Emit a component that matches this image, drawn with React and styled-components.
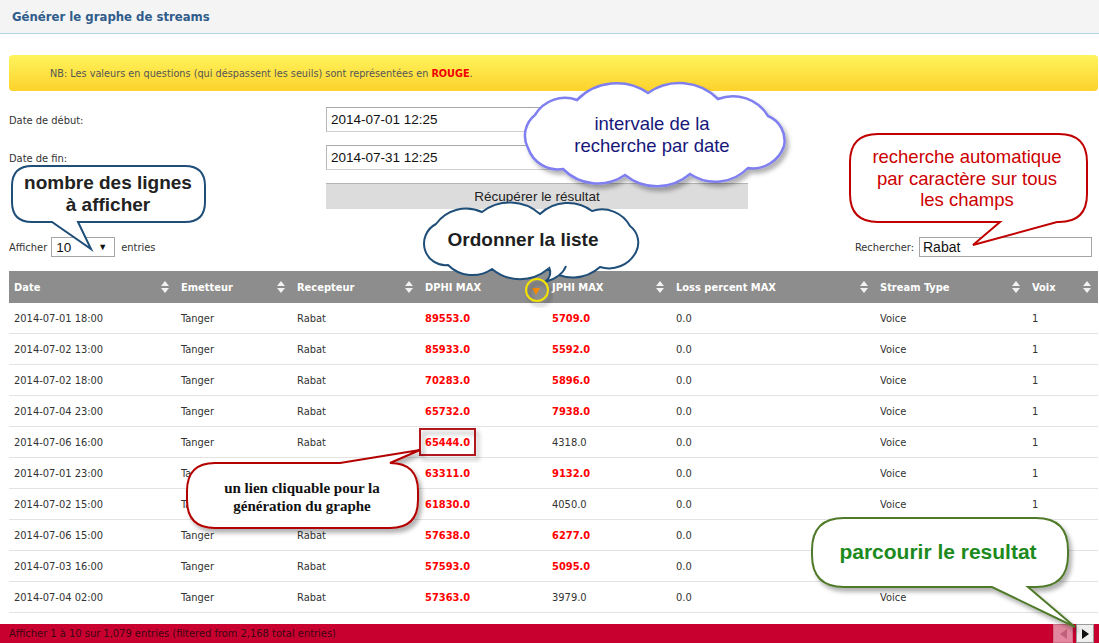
import React from 'react';
import styled, { createGlobalStyle } from 'styled-components';

// --- DATA ---
const COLUMNS = [
  { label: 'Date', width: 167 },
  { label: 'Emetteur', width: 116 },
  { label: 'Recepteur', width: 128 },
  { label: 'DPHI MAX', width: 127, active: true },
  { label: 'JPHI MAX', width: 124 },
  { label: 'Loss percent MAX', width: 204 },
  { label: 'Stream Type', width: 152 },
  { label: 'Voix', width: 71 },
];

const GRID = COLUMNS.map((c) => `${c.width}px`).join(' ');

const ROWS = [
  ['2014-07-01 18:00', '89553.0', '5709.0', true],
  ['2014-07-02 13:00', '85933.0', '5592.0', true],
  ['2014-07-02 18:00', '70283.0', '5896.0', true],
  ['2014-07-04 23:00', '65732.0', '7938.0', true],
  ['2014-07-06 16:00', '65444.0', '4318.0', false],
  ['2014-07-01 23:00', '63311.0', '9132.0', true],
  ['2014-07-02 15:00', '61830.0', '4050.0', false],
  ['2014-07-06 15:00', '57638.0', '6277.0', true],
  ['2014-07-03 16:00', '57593.0', '5095.0', true],
  ['2014-07-04 02:00', '57363.0', '3979.0', false],
];

const UI_FONT = "'DejaVu Sans Condensed', 'Liberation Sans', sans-serif";
const ARIAL = "'Liberation Sans', Arial, sans-serif";

// --- GLOBAL ---
const GlobalStyle = createGlobalStyle`
  html, body { margin: 0; padding: 0; background: #fff; }
  body { font-family: ${UI_FONT}; color: #333; }
  * { box-sizing: border-box; }
`;

// --- LAYOUT ---
const Page = styled.div`
  position: relative;
  width: 1099px;
  height: 643px;
  overflow: hidden;
  display: flex;
  flex-direction: column;
`;

const TitleBar = styled.header`
  height: 34px;
  flex-shrink: 0;
  background: #f4f4f4;
  border-bottom: 1px solid #b3d3e3;
  display: flex;
  align-items: center;
  padding-left: 12px;
  font-size: 13px;
  font-weight: 700;
  color: #2f5c8b;
`;

const Content = styled.main`
  flex: 1;
  padding: 0 1px 0 9px;
  display: flex;
  flex-direction: column;
`;

const Notice = styled.div`
  margin-top: 21px;
  height: 36px;
  border-radius: 4px;
  background: linear-gradient(#fff45c, #fdd22c);
  display: flex;
  align-items: center;
  padding-left: 41px;
  font-size: 10.8px;
  color: #555;

  b { color: #f00000; }
`;

// --- FORM ---
const DateForm = styled.div`
  margin-top: 16px;
  display: grid;
  grid-template-columns: 317px 432px;
  grid-auto-rows: 25px;
  row-gap: 13px;
  align-items: center;
`;

const FieldLabel = styled.label`
  font-size: 11px;
  color: #333;
  padding-top: 1px;
`;

const DateInput = styled.input`
  height: 25px;
  width: 100%;
  border: 1px solid #d0d0d0;
  border-top-color: #a8a8a8;
  border-left-color: #b8b8b8;
  padding: 0 4px;
  font-family: ${ARIAL};
  font-size: 13.5px;
  color: #111;
  outline: none;
`;

const SubmitButton = styled.button`
  grid-column: 2;
  width: 422px;
  height: 26px;
  border: none;
  border-top: 1px solid #b5b5b5;
  background: #dcdcdc;
  font-family: ${ARIAL};
  font-size: 13.5px;
  color: #222;
  padding: 0;
`;

// --- CONTROLS ---
const Controls = styled.div`
  margin-top: 29px;
  height: 20px;
  display: flex;
  align-items: center;
  justify-content: space-between;
  font-size: 11px;
`;

const ControlGroup = styled.div`
  display: flex;
  align-items: center;
`;

const LengthSelect = styled.div`
  width: 64px;
  height: 20px;
  margin: 0 6px 0 4px;
  border: 1px solid #a5a5a5;
  display: flex;
  align-items: center;
  justify-content: space-between;
  padding: 0 7px 0 4px;
  font-family: ${ARIAL};
  font-size: 13.5px;
  color: #111;

  span { font-size: 9px; }
`;

const SearchInput = styled.input`
  width: 173px;
  height: 20px;
  margin: 0 6px 0 5px;
  border: 1px solid #a5a5a5;
  padding: 0 3px;
  font-family: ${ARIAL};
  font-size: 14px;
  color: #111;
  outline: none;
`;

// --- TABLE ---
const Table = styled.div`
  margin-top: 14px;
  width: 1089px;
`;

const HeadRow = styled.div`
  display: grid;
  grid-template-columns: ${GRID};
  height: 32px;
  background: #8d8d8d;
`;

const HeadCell = styled.div`
  display: flex;
  align-items: center;
  justify-content: space-between;
  padding: 0 7px 0 5px;
  font-size: 11px;
  font-weight: 700;
  color: #fff;
`;

const SortIcon = styled.span`
  display: flex;
  flex-direction: column;
  gap: 2px;
  transform: translateY(${(p) => (p.$active ? 4 : 0)}px);

  &::before,
  &::after {
    content: '';
    border-left: 4px solid transparent;
    border-right: 4px solid transparent;
  }
  &::before {
    border-bottom: 5px solid #f2f2f2;
    display: ${(p) => (p.$active ? 'none' : 'block')};
  }
  &::after {
    border-top: ${(p) => (p.$active ? '7px solid #f58a07' : '5px solid #f2f2f2')};
  }
`;

const BodyRow = styled.div`
  display: grid;
  grid-template-columns: ${GRID};
  height: 31px;
  border-bottom: 1px solid #e3e3e3;
  align-items: center;
`;

const Cell = styled.div`
  padding-left: 5px;
  font-size: 11px;
  color: ${(p) => (p.$alert ? '#ff0000' : '#333')};
  font-weight: ${(p) => (p.$alert ? 700 : 400)};
`;

// --- FOOTER ---
const Footer = styled.footer`
  height: 19px;
  flex-shrink: 0;
  background: #c8002f;
  display: flex;
  align-items: center;
  justify-content: space-between;
  padding: 0 5px 0 9px;
  font-size: 11px;
  color: #3c0812;
`;

const Pager = styled.div`
  display: flex;
  gap: 3px;
  height: 19px;
`;

const PageButton = styled.div`
  width: ${(p) => (p.$disabled ? 20 : 18)}px;
  height: 19px;
  display: flex;
  align-items: center;
  justify-content: center;
  background: ${(p) => (p.$disabled ? '#e2889e' : '#eeeeee')};
  border: 1px solid ${(p) => (p.$disabled ? '#d46c86' : '#9a9a9a')};

  &::after {
    content: '';
    border-top: 5px solid transparent;
    border-bottom: 5px solid transparent;
    ${(p) =>
      p.$disabled
        ? 'border-right: 7px solid #c0607a;'
        : 'border-left: 7px solid #111;'}
  }
`;

// --- ANNOTATIONS ---
const Overlay = styled.svg`
  position: absolute;
  left: 0;
  top: 0;
  width: 1099px;
  height: 643px;
  pointer-events: none;
  z-index: 2;
`;

const Note = styled.div`
  position: absolute;
  left: ${(p) => p.$x}px;
  top: ${(p) => p.$y}px;
  width: ${(p) => p.$w}px;
  text-align: center;
  font-family: ${(p) => (p.$serif ? "'Liberation Serif', 'Times New Roman', serif" : ARIAL)};
  font-size: ${(p) => p.$size}px;
  font-weight: ${(p) => (p.$bold ? 700 : 400)};
  line-height: ${(p) => p.$lh}px;
  color: ${(p) => p.$color};
  z-index: 3;
`;

// bumpy outline through the given points, each segment an outward arc
const cloudPath = (pts, k = 0.78) => {
  let d = `M ${pts[0][0]} ${pts[0][1]}`;
  for (let i = 1; i <= pts.length; i++) {
    const [x0, y0] = pts[i - 1];
    const [x, y] = pts[i % pts.length];
    const r = (Math.hypot(x - x0, y - y0) * k).toFixed(1);
    d += ` A ${r} ${r} 0 0 1 ${x} ${y}`;
  }
  return `${d} Z`;
};

const DATE_CLOUD = cloudPath([
  [528, 148], [535, 115], [577, 100], [648, 93], [718, 99], [768, 116],
  [784, 146], [748, 168], [690, 174], [625, 175], [563, 169],
]);

const SORT_CLOUD = cloudPath([
  [425, 250], [436, 224], [482, 212], [540, 214], [592, 211], [630, 226],
  [636, 252], [600, 267], [548, 269], [492, 269], [448, 265],
]);

const Annotations = () => (
  <Overlay viewBox="0 0 1099 643">
    <defs>
      <filter id="shadow" x="-10%" y="-10%" width="130%" height="140%">
        <feDropShadow dx="3" dy="4" stdDeviation="2" floodColor="#000" floodOpacity="0.3" />
      </filter>
    </defs>

    {/* date cloud */}
    <path d={DATE_CLOUD} fill="#fff" stroke="#7f7ff0" strokeWidth="2.5" filter="url(#shadow)" />

    {/* rows count bubble */}
    <path
      d="M 32 166 H 185 Q 205 166 205 186 V 202 Q 205 222 185 222 H 78 L 91 249 L 52 222 H 32 Q 12 222 12 202 V 186 Q 12 166 32 166 Z"
      fill="#fff"
      stroke="#1f4e79"
      strokeWidth="2"
    />

    {/* sort cloud */}
    <path d={SORT_CLOUD} fill="#fff" stroke="#1f4e79" strokeWidth="2" />
    <path d="M 549 267 Q 553 276 545 282 Q 562 277 566 266" fill="#fff" stroke="#1f4e79" strokeWidth="2" />
    <circle cx="537" cy="290" r="11" fill="none" stroke="#f3e200" strokeWidth="2" filter="url(#shadow)" />

    {/* search bubble */}
    <path
      d="M 878 134 H 1059 Q 1087 134 1087 162 V 194 Q 1087 222 1059 222 H 1057 L 973 245 L 1000 222 H 878 Q 850 222 850 194 V 162 Q 850 134 878 134 Z"
      fill="#fff"
      stroke="#c00000"
      strokeWidth="2"
    />

    {/* link highlight */}
    <rect x="420" y="429" width="55" height="26" fill="none" stroke="#b3141c" strokeWidth="2" filter="url(#shadow)" />

    {/* link bubble */}
    <path
      d="M 215 463 H 340 L 420 450 L 390 463 Q 418 463 418 491 V 500 Q 418 528 390 528 H 215 Q 187 528 187 500 V 491 Q 187 463 215 463 Z"
      fill="#fff"
      stroke="#b30000"
      strokeWidth="2"
      filter="url(#shadow)"
    />

    {/* pager bubble */}
    <path
      d="M 844 518 H 1036 Q 1068 518 1068 550 V 555 Q 1068 587 1036 587 H 1028 L 1075 627 L 992 587 H 844 Q 812 587 812 555 V 550 Q 812 518 844 518 Z"
      fill="#fff"
      stroke="#507a2a"
      strokeWidth="2"
      filter="url(#shadow)"
    />
  </Overlay>
);

// --- COMPONENT ---
const App = () => (
  <>
    <GlobalStyle />
    <Page>
      <TitleBar>Générer le graphe de streams</TitleBar>

      <Content>
        <Notice>
          <span>
            NB: Les valeurs en questions (qui déspassent les seuils) sont représentées en <b>ROUGE</b>.
          </span>
        </Notice>

        <DateForm>
          <FieldLabel>Date de début:</FieldLabel>
          <DateInput readOnly value="2014-07-01 12:25" />
          <FieldLabel>Date de fin:</FieldLabel>
          <DateInput readOnly value="2014-07-31 12:25" />
          <SubmitButton>Récupérer le résultat</SubmitButton>
        </DateForm>

        <Controls>
          <ControlGroup>
            Afficher
            <LengthSelect>
              10 <span>▼</span>
            </LengthSelect>
            entries
          </ControlGroup>
          <ControlGroup>
            Rechercher:
            <SearchInput readOnly value="Rabat" />
          </ControlGroup>
        </Controls>

        <Table>
          <HeadRow>
            {COLUMNS.map((c) => (
              <HeadCell key={c.label}>
                {c.label}
                <SortIcon $active={c.active} />
              </HeadCell>
            ))}
          </HeadRow>
          {ROWS.map(([date, dphi, jphi, jAlert]) => (
            <BodyRow key={date}>
              <Cell>{date}</Cell>
              <Cell>Tanger</Cell>
              <Cell>Rabat</Cell>
              <Cell $alert>{dphi}</Cell>
              <Cell $alert={jAlert}>{jphi}</Cell>
              <Cell>0.0</Cell>
              <Cell>Voice</Cell>
              <Cell>1</Cell>
            </BodyRow>
          ))}
        </Table>
      </Content>

      <Footer>
        Afficher 1 à 10 sur 1,079 entries (filtered from 2,168 total entries)
        <Pager>
          <PageButton $disabled />
          <PageButton />
        </Pager>
      </Footer>

      <Annotations />
      <Note $x={552} $y={113} $w={200} $size={18.5} $lh={22} $color="#17177a">
        intervale de la
        <br />
        recherche par date
      </Note>
      <Note $x={12} $y={172} $w={192} $size={19} $lh={22} $bold $color="#222">
        nombre des lignes
        <br />à afficher
      </Note>
      <Note $x={423} $y={229} $w={200} $size={19} $lh={22} $bold $color="#1e1e1e">
        Ordonner la liste
      </Note>
      <Note $x={852} $y={146} $w={230} $size={18.5} $lh={21.5} $color="#cc0000">
        recherche automatique
        <br />
        par caractère sur tous
        <br />
        les champs
      </Note>
      <Note $x={187} $y={479} $w={230} $size={15} $lh={18} $bold $serif $color="#111">
        un lien cliquable pour la
        <br />
        génération du graphe
      </Note>
      <Note $x={813} $y={540} $w={250} $size={21} $lh={24} $bold $color="#1c8a1c">
        parcourir le resultat
      </Note>
    </Page>
  </>
);

export default App;
